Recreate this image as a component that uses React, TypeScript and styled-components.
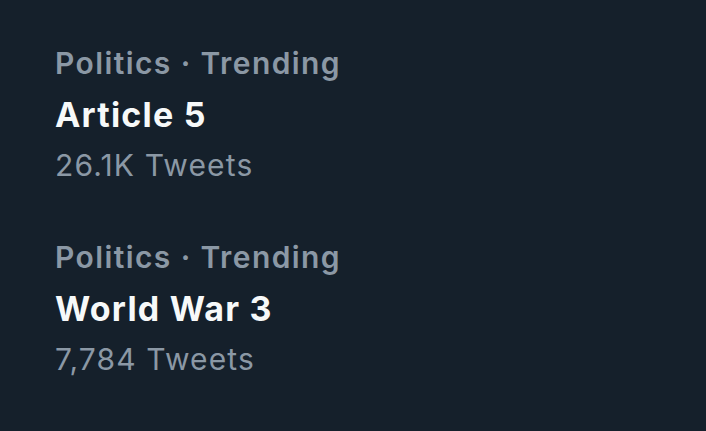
import React from "react";
import styled, { createGlobalStyle } from "styled-components";

const Global = createGlobalStyle`
  html, body { margin: 0; padding: 0; background: #15202B; }
  body { width: 706px; height: 431px; overflow: hidden; }
`;

const Page = styled.div`
  width: 706px;
  height: 431px;
  background: #15202B;
  box-sizing: border-box;
  padding: 39px 0 0 55px;
  display: flex;
  flex-direction: column;
  gap: 45px;
  font-family: Inter, "Liberation Sans", sans-serif;
`;

const Trend = styled.div`
  display: flex;
  flex-direction: column;
`;

const Category = styled.div`
  font-size: 30px;
  line-height: 48px;
  height: 48px;
  font-weight: 600;
  letter-spacing: 1.4px;
  color: #8B98A5;
  white-space: nowrap;
`;

const Title = styled.div`
  font-size: 34px;
  line-height: 55px;
  height: 55px;
  font-weight: 700;
  letter-spacing: 1.2px;
  color: #F7F9F9;
  white-space: nowrap;
`;

const Count = styled.div`
  font-size: 30px;
  line-height: 46px;
  height: 46px;
  font-weight: 400;
  letter-spacing: 1.15px;
  color: #8B98A5;
  white-space: nowrap;
`;

const trends = [
  { category: "Politics · Trending", title: "Article 5", count: "26.1K Tweets" },
  { category: "Politics · Trending", title: "World War 3", count: "7,784 Tweets" },
];

export default function App() {
  return (
    <>
      <Global />
      <Page>
        {trends.map((t) => (
          <Trend key={t.title}>
            <Category>{t.category}</Category>
            <Title>{t.title}</Title>
            <Count>{t.count}</Count>
          </Trend>
        ))}
      </Page>
    </>
  );
}
